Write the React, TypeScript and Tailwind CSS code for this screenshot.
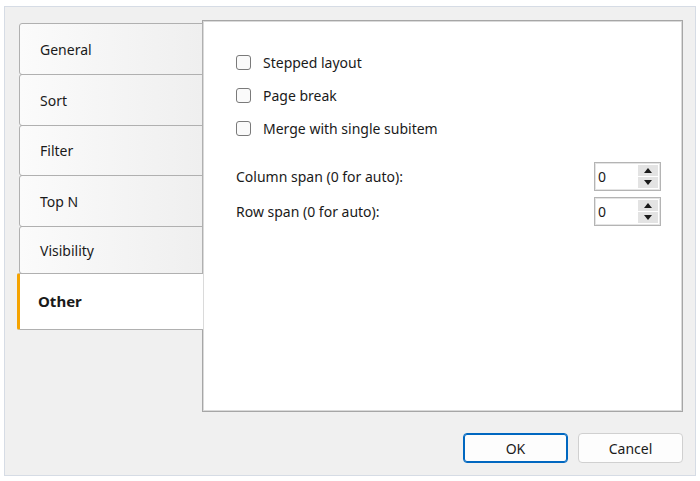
import { useState } from "react";

const tabs = [
  { name: "General", h: "h-[52px]" },
  { name: "Sort", h: "h-[52px]" },
  { name: "Filter", h: "h-[51px]" },
  { name: "Top N", h: "h-[52px]" },
  { name: "Visibility", h: "h-[48px]" },
  { name: "Other", h: "h-[57px]" },
];

const options = ["Stepped layout", "Page break", "Merge with single subitem"];

function SpinBox({ value }: { value: string }) {
  return (
    <div className="flex h-[29px] w-[67px] border border-[#b4b4b4] bg-white shadow-[inset_0_0_0_1px_#e4e4e4]">
      <div className="flex flex-1 items-center pl-[3px] text-[14px] text-[#1a1a1a]">{value}</div>
      <div className="my-[2px] mr-[2px] flex w-[20px] flex-col gap-px">
        <div className="flex flex-1 items-center justify-center bg-[#e3e3e3]">
          <svg width="8" height="5" viewBox="0 0 8 5">
            <path d="M0 5 L4 0 L8 5 Z" fill="#1a1a1a" />
          </svg>
        </div>
        <div className="flex flex-1 items-center justify-center bg-[#e3e3e3]">
          <svg width="8" height="5" viewBox="0 0 8 5">
            <path d="M0 0 L8 0 L4 5 Z" fill="#1a1a1a" />
          </svg>
        </div>
      </div>
    </div>
  );
}

export default function App() {
  const [active, setActive] = useState("Other");

  return (
    <div className="h-[481px] w-[700px] bg-white pl-[4px] pt-[6px] font-['Noto_Sans',sans-serif] text-[#1a1a1a]">
      <div className="flex h-[470px] w-[692px] flex-col border border-[#d6dce5] bg-[#f0f0f0]">
        <div className="flex pl-[14px] pt-[13px]">
          <div className="relative z-10 -mr-px mt-[3px] flex w-[184px] flex-col">
            {tabs.map((tab) =>
              tab.name === active ? (
                <div
                  key={tab.name}
                  className={`-ml-[2px] -mt-px flex ${tab.h} items-center rounded-l-[2px] border-y border-l-[3px] border-y-[#b0b0b0] border-l-[#f5a300] bg-white pl-[18px] text-[15px] font-bold`}
                >
                  {tab.name}
                </div>
              ) : (
                <div
                  key={tab.name}
                  onClick={() => setActive(tab.name)}
                  className={`-mt-px flex ${tab.h} cursor-default items-center rounded-l-[3px] border border-[#b0b0b0] bg-gradient-to-r from-[#fbfbfb] to-[#efefef] pl-[20px] text-[14px] first:mt-0`}
                >
                  {tab.name}
                </div>
              )
            )}
          </div>
          <div className="h-[392px] w-[481px] border border-[#a6a6a6] bg-white pl-[33px] pt-[34px] shadow-[inset_0_0_0_1px_#dadada]">
            <div className="flex flex-col gap-[19px]">
              {options.map((o) => (
                <label key={o} className="flex h-[14px] items-center gap-[12px] text-[14px]">
                  <span className="h-[15px] w-[15px] rounded-[3px] border border-[#7a7a7a] bg-[#fafafa]" />
                  {o}
                </label>
              ))}
            </div>
            <div className="mt-[27px] flex flex-col gap-[6px] pr-[21px]">
              <div className="flex items-center justify-between">
                <span className="text-[14px]">Column span (0 for auto):</span>
                <SpinBox value="0" />
              </div>
              <div className="flex items-center justify-between">
                <span className="text-[14px]">Row span (0 for auto):</span>
                <SpinBox value="0" />
              </div>
            </div>
          </div>
        </div>
        <div className="mt-[21px] flex justify-end gap-[10px] pr-[12px]">
          <button className="h-[30px] w-[105px] rounded-[4px] border border-[#0067c0] bg-[#fdfdfd] text-[14px] shadow-[inset_0_0_0_1px_#0067c0]">
            OK
          </button>
          <button className="h-[30px] w-[105px] rounded-[4px] border border-[#d0d0d0] bg-[#fdfdfd] text-[14px]">
            Cancel
          </button>
        </div>
      </div>
    </div>
  );
}
